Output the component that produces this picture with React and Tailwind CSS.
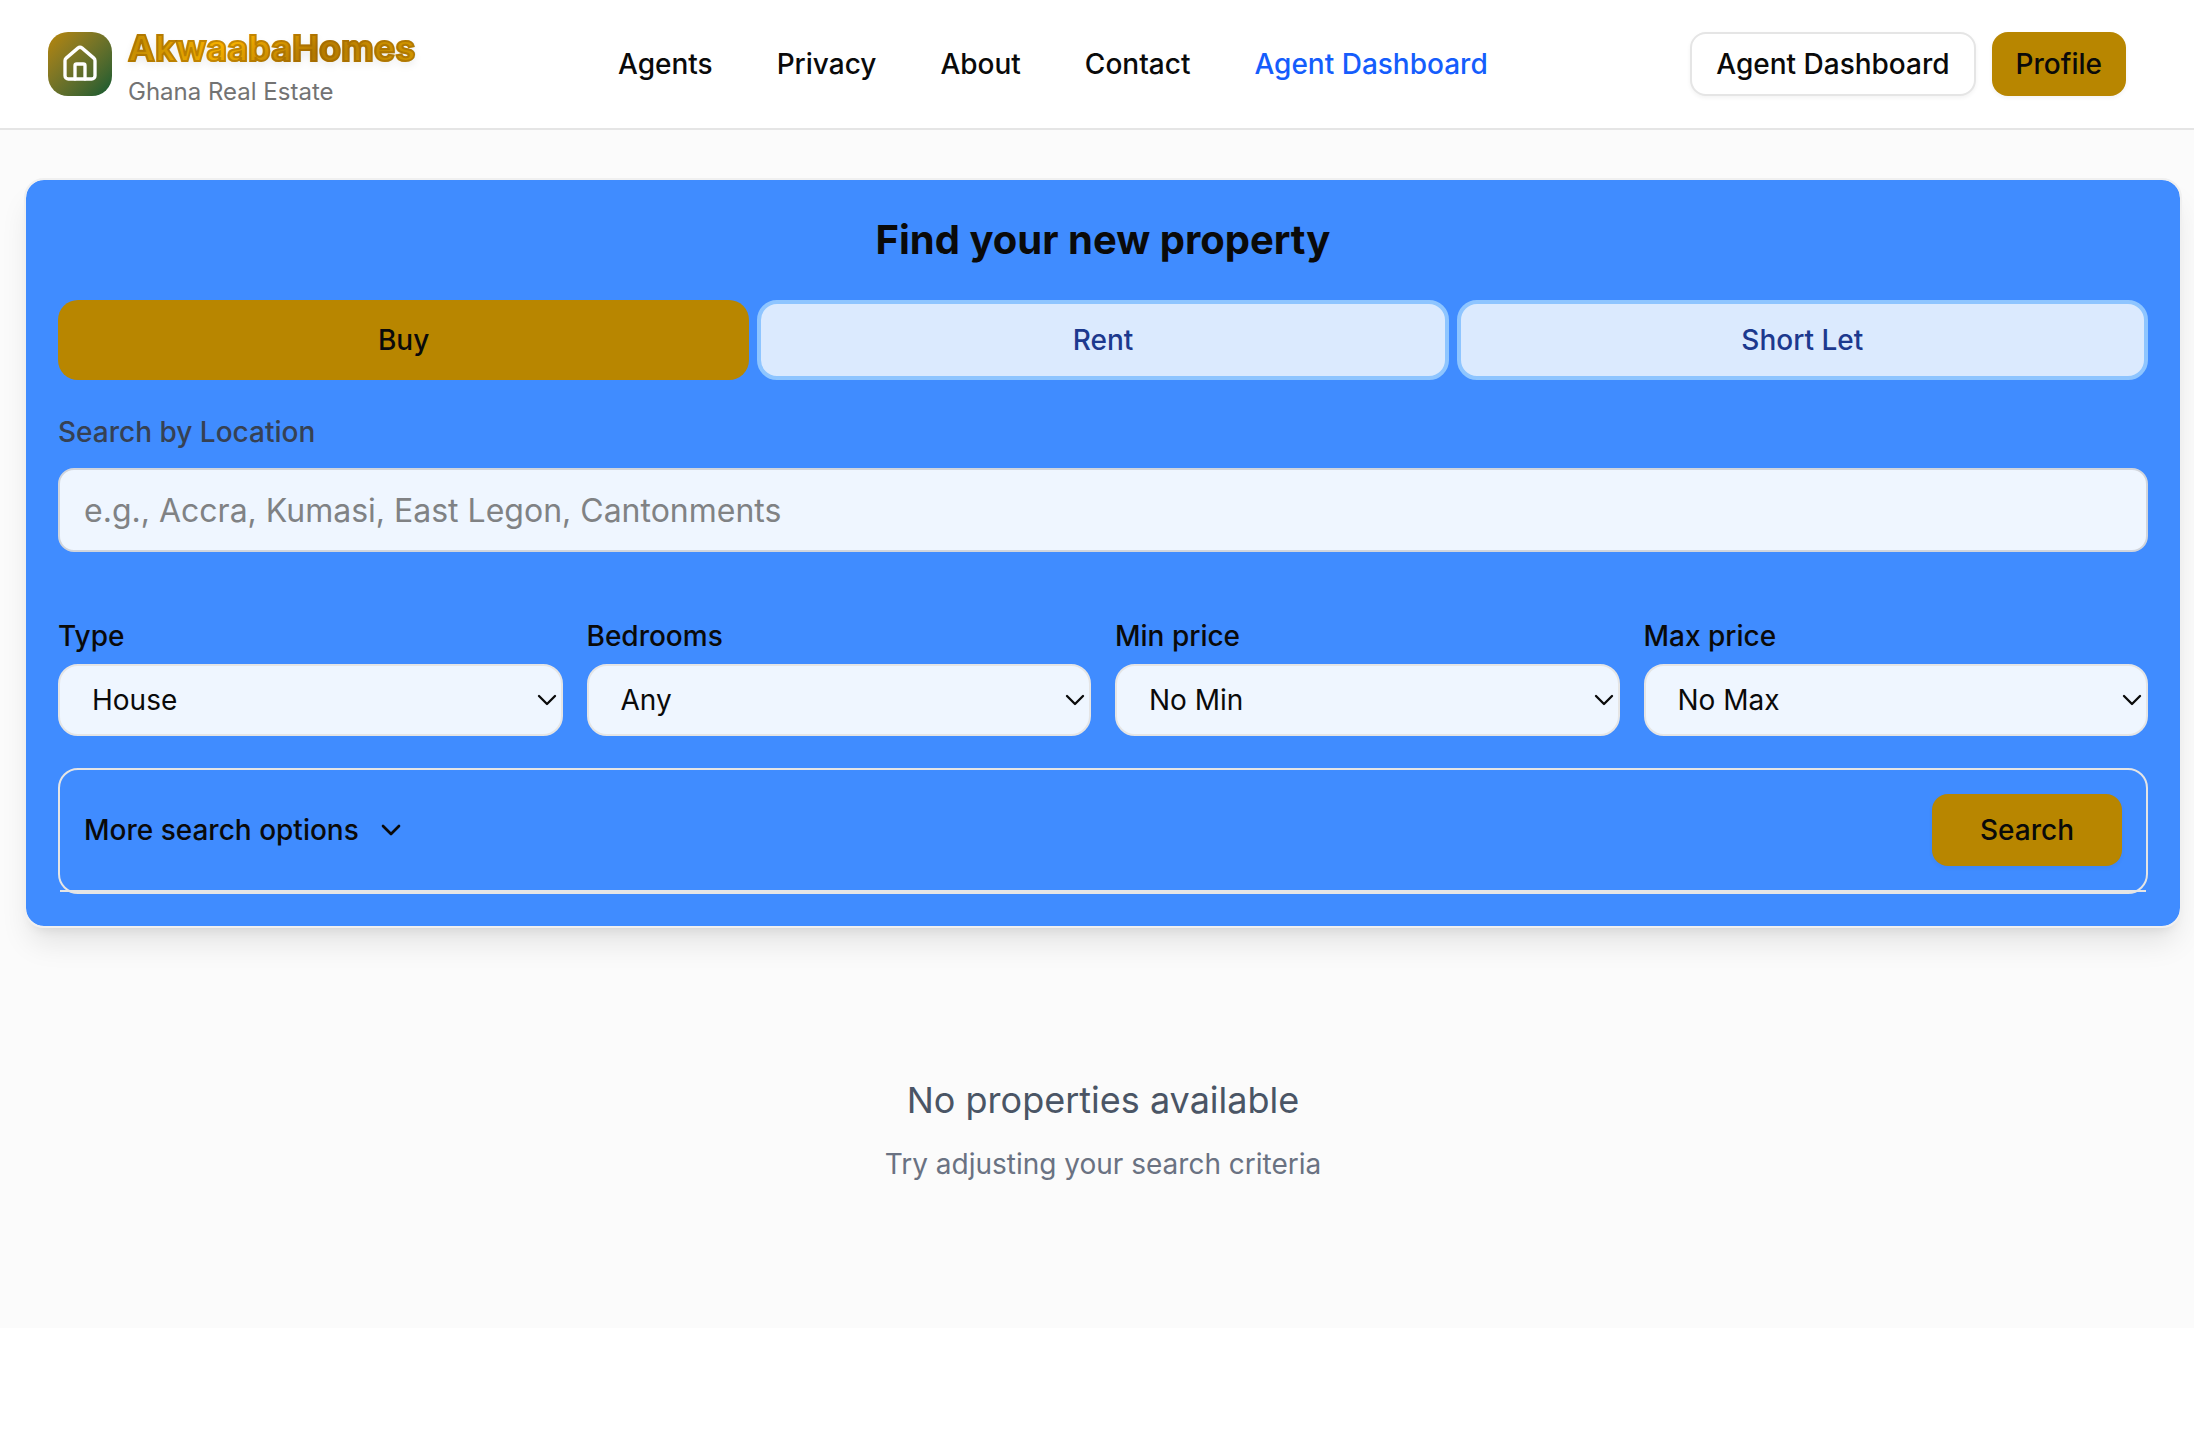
import { ChevronDown } from "lucide-react";

const links = ["Agents", "Privacy", "About", "Contact"];

const filters = [
  { id: "type", label: "Type", value: "House" },
  { id: "bedrooms", label: "Bedrooms", value: "Any" },
  { id: "min-price", label: "Min price", value: "No Min" },
  { id: "max-price", label: "Max price", value: "No Max" },
];

function HouseIcon() {
  return (
    <svg
      className="size-10"
      viewBox="0 0 24 24"
      fill="none"
      stroke="currentColor"
      strokeWidth="2"
      strokeLinecap="round"
      strokeLinejoin="round"
      aria-hidden="true"
    >
      <path d="M15 21v-8a1 1 0 0 0-1-1h-4a1 1 0 0 0-1 1v8" />
      <path d="M3 10a2 2 0 0 1 .709-1.528l7-5.999a2 2 0 0 1 2.582 0l7 5.999A2 2 0 0 1 21 10v9a2 2 0 0 1-2 2H5a2 2 0 0 1-2-2z" />
    </svg>
  );
}

function Header() {
  return (
    <header className="flex items-center justify-between border-b-2 border-[#e5e5e5] bg-white py-4 pr-[68px] pl-12">
      <a href="#home" className="flex h-24 items-center gap-4">
        <span className="flex size-16 items-center justify-center rounded-[20px] bg-linear-to-br from-[#b88600] to-[#005a30] text-white">
          <HouseIcon />
        </span>
        <span className="flex flex-col pt-2">
          <span className="bg-[linear-gradient(135deg,#c48c00_0%,#ffb700_35%,#bd8000_65%,#ddA000_100%)] bg-clip-text text-4xl leading-10 font-bold text-transparent [-webkit-text-stroke:2px_rgba(150,95,0,0.5)] [text-shadow:0_4px_8px_rgba(0,0,0,0.1)]">
            AkwaabaHomes
          </span>
          <span className="mt-2 text-2xl leading-8 text-[#737373]">Ghana Real Estate</span>
        </span>
      </a>
      <nav className="flex items-center gap-16 font-medium">
        {links.map((l) => (
          <a key={l} href={"#" + l.toLowerCase()}>
            {l}
          </a>
        ))}
        <a href="#dashboard" className="text-[#155dfc]">
          Agent Dashboard
        </a>
      </nav>
      <div className="flex items-center gap-4 font-medium">
        <button className="h-16 rounded-2xl border-2 border-[#e5e5e5] bg-white px-6 shadow-[0_2px_4px_rgba(0,0,0,0.05)]">
          Agent Dashboard
        </button>
        <button className="h-16 rounded-2xl bg-[#b88600] px-6 shadow-[0_2px_4px_rgba(0,0,0,0.05)]">Profile</button>
      </div>
    </header>
  );
}

function SearchCard() {
  return (
    <section className="mr-3 ml-6 rounded-[20px] border-2 border-[#f0f0f0] bg-[#408cff] bg-clip-padding p-8 shadow-[0_20px_30px_-6px_rgba(0,0,0,0.1),0_8px_12px_-8px_rgba(0,0,0,0.1)]">
      <h1 className="text-center text-[40px] leading-14 font-bold">Find your new property</h1>
      <div className="mt-8 grid grid-cols-3 gap-2 font-medium">
        <button className="h-20 rounded-[20px] bg-[#b88600]">Buy</button>
        <button className="h-20 rounded-[20px] border-4 border-[#8ec5ff] bg-[#dbeafe] text-[#1c398e]">Rent</button>
        <button className="h-20 rounded-[20px] border-4 border-[#8ec5ff] bg-[#dbeafe] text-[#1c398e]">Short Let</button>
      </div>
      <label htmlFor="location" className="mt-8 block leading-10 font-medium text-[#364153]">
        Search by Location
      </label>
      <input
        id="location"
        placeholder="e.g., Accra, Kumasi, East Legon, Cantonments"
        className="mt-4 block h-[84px] w-full rounded-2xl border-2 border-[#d1d5dc] bg-[#eff6ff] px-6 text-[32px] placeholder:text-[#808284]"
      />
      <div className="mt-16 grid grid-cols-4 gap-6">
        {filters.map((f) => (
          <div key={f.id}>
            <label htmlFor={f.id} className="block leading-10 font-medium">
              {f.label}
            </label>
            <div className="relative mt-2">
              <select
                id={f.id}
                className="block h-18 w-full appearance-none rounded-[20px] border-2 border-[#e5e5e5] bg-[#eff6ff] px-8"
              >
                <option>{f.value}</option>
              </select>
              <ChevronDown className="pointer-events-none absolute top-5 right-0 size-8" strokeWidth={1.75} aria-hidden="true" />
            </div>
          </div>
        ))}
      </div>
      <div className="mt-8 rounded-[20px] border-2 border-[#e5e5e5]">
        <div className="flex items-center justify-between border-b-2 border-[#e5e5e5] p-6">
          <button className="flex items-center gap-4 font-medium">
            More search options
            <ChevronDown className="size-8" aria-hidden="true" />
          </button>
          <button className="h-18 rounded-2xl bg-[#b88600] px-12 font-medium shadow-[0_2px_4px_rgba(0,0,0,0.05)]">
            Search
          </button>
        </div>
      </div>
    </section>
  );
}

export default function App() {
  return (
    <div className="min-h-screen bg-white font-[Inter,sans-serif] text-[28px] leading-10 text-[#0a0a0a]">
      <Header />
      <main className="bg-[#fbfbfb] pt-12 pb-24">
        <SearchCard />
        <div className="mt-32 mr-3 ml-6 pt-4 pb-12 text-center">
          <p className="text-4xl leading-14 text-[#4a5565]">No properties available</p>
          <p className="mt-4 text-[#6a7282]">Try adjusting your search criteria</p>
        </div>
      </main>
    </div>
  );
}
